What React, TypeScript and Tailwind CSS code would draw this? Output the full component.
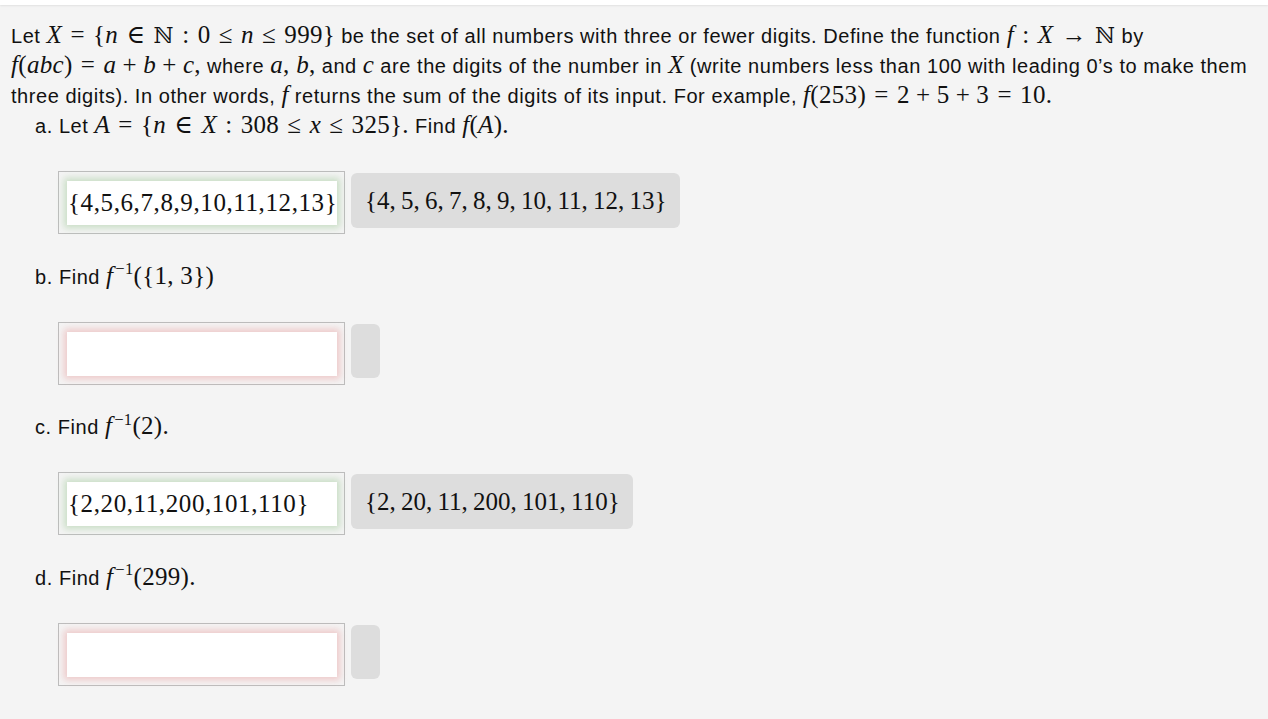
import type { ReactNode } from 'react';

// inline math chunk, kept on one line like a rendered formula
function M({ children }: { children: ReactNode }) {
  return (
    <span className="whitespace-nowrap font-['Liberation_Serif','DejaVu_Serif',serif] text-[25px] leading-none tracking-[0.3px]">
      {children}
    </span>
  );
}

const V = ({ children }: { children: ReactNode }) => <i>{children}</i>;
const Rel = ({ c }: { c: string }) => <span className="mx-[0.33em]">{c}</span>;
const Bin = ({ c }: { c: string }) => <span className="mx-[0.25em]">{c}</span>;
const Nat = () => <span className="font-['DejaVu_Serif',serif] text-[0.88em]">ℕ</span>;
const Inv = () => <sup className="text-[0.66em] top-[-0.55em] ml-[2px]">−1</sup>;

function AnswerRow({ value, shown, ok }: { value?: string; shown?: ReactNode; ok: boolean }) {
  return (
    <div className="flex items-start gap-[6px] ml-[23px]">
      <div className="w-[287px] h-[63px] border border-[#bdbdbd] bg-[#f4f4f4] pl-[8px] pr-[7px] pt-[9px] pb-[8px]">
        <div
          className={`h-[44px] bg-white flex items-center pl-[1px] font-['Liberation_Serif',serif] text-[25px] tracking-[0.6px] text-[#111] whitespace-nowrap ${
            ok ? 'shadow-[0_0_7px_3px_rgba(120,180,110,0.35)]' : 'shadow-[0_0_7px_3px_rgba(225,120,120,0.35)]'
          }`}
        >
          {value}
        </div>
      </div>
      {shown ? (
        <div className="mt-[2px] h-[55px] rounded-[6px] bg-[#dddddd] pl-[14px] pr-[13px] flex items-center font-['Liberation_Serif',serif] text-[25px] tracking-normal [word-spacing:-1px] text-[#111] whitespace-nowrap">
          {shown}
        </div>
      ) : (
        <div className="mt-[2px] w-[29px] h-[54px] rounded-[6px] bg-[#dddddd]" />
      )}
    </div>
  );
}

export default function App() {
  return (
    <div className="min-h-screen bg-[#f4f4f4] text-[#111] font-['Liberation_Sans',Arial,sans-serif] text-[20px] tracking-[0.55px]">
      <div className="h-[5px] bg-white shadow-[0_1px_2px_rgba(0,0,0,0.08)]" />
      <div className="pl-[11px] pt-[16px] leading-[30px]">
        <p className="whitespace-nowrap">
          Let{' '}
          <M>
            <V>X</V>
            <Rel c="=" />
            {'{'}
            <V>n</V>
            <Rel c="∈" />
            <Nat />
            <Rel c=":" />0<Rel c="≤" />
            <V>n</V>
            <Rel c="≤" />
            999{'}'}
          </M>{' '}
          be the set of all numbers with three or fewer digits. Define the function{' '}
          <M>
            <V>f</V>
            <Rel c=":" />
            <V>X</V>
            <Rel c="→" />
            <Nat />
          </M>{' '}
          by
          <br />
          <M>
            <V>f</V>(<V>abc</V>)<Rel c="=" />
            <V>a</V>
            <Bin c="+" />
            <V>b</V>
            <Bin c="+" />
            <V>c</V>,
          </M>{' '}
          where{' '}
          <M>
            <V>a</V>, <V>b</V>,
          </M>{' '}
          and{' '}
          <M>
            <V>c</V>
          </M>{' '}
          are the digits of the number in{' '}
          <M>
            <V>X</V>
          </M>{' '}
          (write numbers less than 100 with leading 0’s to make them
          <br />
          three digits). In other words,{' '}
          <M>
            <V>f</V>
          </M>{' '}
          returns the sum of the digits of its input. For example,{' '}
          <M>
            <V>f</V>(253)<Rel c="=" />2<Bin c="+" />5<Bin c="+" />3<Rel c="=" />
            10.
          </M>
        </p>

        <div className="ml-[24px]">
          a. Let{' '}
          <M>
            <V>A</V>
            <Rel c="=" />
            {'{'}
            <V>n</V>
            <Rel c="∈" />
            <V>X</V>
            <Rel c=":" />
            308<Rel c="≤" />
            <V>x</V>
            <Rel c="≤" />
            325{'}'}.
          </M>{' '}
          Find{' '}
          <M>
            <V>f</V>(<V>A</V>).
          </M>
        </div>
      </div>

      <div className="pl-[35px] leading-[30px]">
        <div className="mt-[30px] -ml-[35px] pl-[35px]">
          <AnswerRow
            ok
            value="{4,5,6,7,8,9,10,11,12,13}"
            shown={<span>{'{4, 5, 6, 7, 8, 9, 10, 11, 12, 13}'}</span>}
          />
        </div>

        <div className="mt-[27.5px]">
          b. Find{' '}
          <M>
            <V>f</V>
            <Inv />
            ({'{'}1, 3{'}'})
          </M>
        </div>
        <div className="mt-[30px]">
          <AnswerRow ok={false} />
        </div>

        <div className="mt-[27.5px]">
          c. Find{' '}
          <M>
            <V>f</V>
            <Inv />
            (2).
          </M>
        </div>
        <div className="mt-[30px]">
          <AnswerRow ok value="{2,20,11,200,101,110}" shown={<span>{'{2, 20, 11, 200, 101, 110}'}</span>} />
        </div>

        <div className="mt-[27.5px]">
          d. Find{' '}
          <M>
            <V>f</V>
            <Inv />
            (299).
          </M>
        </div>
        <div className="mt-[30px] pb-[30px]">
          <AnswerRow ok={false} />
        </div>
      </div>
    </div>
  );
}
